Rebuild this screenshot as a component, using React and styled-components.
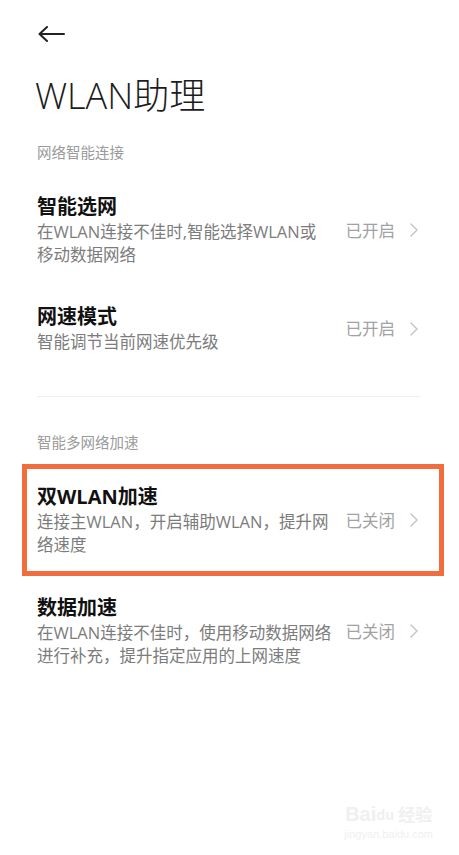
import * as React from 'react';
import styled, { createGlobalStyle } from 'styled-components';

const GlobalStyle = createGlobalStyle`
	html, body {
		margin: 0;
		padding: 0;
		background: #ffffff;
	}
	body {
		font-family: "Open Sans", "Noto Sans CJK SC", sans-serif;
		-webkit-font-smoothing: antialiased;
	}
`;

const Page = styled.div`
	position: relative;
	min-height: 855px;
	background: #ffffff;
	overflow: hidden;
`;

const TopBar = styled.div`
	display: flex;
	align-items: center;
	height: 68px;
	padding-left: 38px;
`;

const BackButton = styled.button`
	display: flex;
	align-items: center;
	padding: 0;
	border: 0;
	background: none;
	color: #222;
`;

const PageTitle = styled.h1`
	margin: 4px 0 0 35px;
	font-size: 36px;
	line-height: 48px;
	font-weight: 300;
	color: #1c1c1c;
`;

const SectionLabel = styled.div`
	padding: ${({ $top }) => $top}px 37px ${({ $bottom }) => $bottom}px;
	font-size: 14.5px;
	line-height: 20px;
	color: #9a9a9a;
`;

const Row = styled.div`
	display: flex;
	align-items: center;
	margin: ${({ $highlight }) => $highlight ? '0 15px 0 22px' : '0'};
	padding: ${({ $highlight }) => $highlight ? '15px 21px 15px 10px' : '19px 41px 19px 37px'};
	border: ${({ $highlight }) => $highlight ? '5px solid #f36c3d' : '0'};
`;

const Texts = styled.div`
	flex: 1;
	min-width: 0;
`;

const RowTitle = styled.div`
	font-size: 20px;
	line-height: 26px;
	font-weight: 700;
	color: #111;
`;

const SubLine = styled.div`
	font-size: 16.5px;
	line-height: 23px;
	color: #7c7c7c;
	white-space: nowrap;
`;

const Status = styled.span`
	font-size: 16.5px;
	line-height: 23px;
	color: #a2a2a2;
	margin-right: 15px;
	white-space: nowrap;
`;

const Divider = styled.div`
	height: 1px;
	margin: 24px 39px 0 37px;
	background: #efefef;
`;

const Watermark = styled.div`
	position: absolute;
	right: 26px;
	bottom: 14px;
	display: flex;
	flex-direction: column;
	align-items: center;
	color: #f0f0f0;
	font-family: "Liberation Sans", sans-serif;
	pointer-events: none;
`;

const WatermarkLogo = styled.div`
	display: flex;
	align-items: flex-end;
	font-size: 20px;
	font-weight: 700;
	line-height: 22px;
`;

const WatermarkSmall = styled.span`
	font-size: ${({ $size }) => $size}px;
	font-family: "Noto Sans CJK SC", "Liberation Sans", sans-serif;
	margin-left: ${({ $gap }) => $gap || 0}px;
`;

const WatermarkUrl = styled.div`
	font-size: 11px;
	line-height: 14px;
	margin-top: 2px;
`;

const ArrowIcon = () => (
	<svg width="27" height="16" viewBox="0 0 27 16" fill="none">
		<path d="M1.5 8H26M9 1L1.5 8L9 15" stroke="currentColor" strokeWidth="2" strokeLinecap="round" strokeLinejoin="round" />
	</svg>
);

const Chevron = () => (
	<svg width="8" height="14" viewBox="0 0 8 14" fill="none">
		<path d="M1 1L7 7L1 13" stroke="#c2c2c2" strokeWidth="1.4" strokeLinecap="round" strokeLinejoin="round" />
	</svg>
);

const SettingRow = ({ title, lines, status, highlight }) => (
	<Row $highlight={highlight}>
		<Texts>
			<RowTitle>{title}</RowTitle>
			{lines.map(line => <SubLine key={line}>{line}</SubLine>)}
		</Texts>
		<Status>{status}</Status>
		<Chevron />
	</Row>
);

export default function App() {
	return (
		<Page>
			<GlobalStyle />
			<TopBar>
				<BackButton aria-label="返回"><ArrowIcon /></BackButton>
			</TopBar>
			<PageTitle>WLAN助理</PageTitle>

			<SectionLabel $top={23} $bottom={12}>网络智能连接</SectionLabel>
			<SettingRow
				title="智能选网"
				lines={['在WLAN连接不佳时,智能选择WLAN或', '移动数据网络']}
				status="已开启"
			/>
			<SettingRow
				title="网速模式"
				lines={['智能调节当前网速优先级']}
				status="已开启"
			/>
			<Divider />

			<SectionLabel $top={36} $bottom={11}>智能多网络加速</SectionLabel>
			<SettingRow
				highlight
				title="双WLAN加速"
				lines={['连接主WLAN，开启辅助WLAN，提升网', '络速度']}
				status="已关闭"
			/>
			<SettingRow
				title="数据加速"
				lines={['在WLAN连接不佳时，使用移动数据网络', '进行补充，提升指定应用的上网速度']}
				status="已关闭"
			/>

			<Watermark>
				<WatermarkLogo>
					Bai<WatermarkSmall $size={14}>du</WatermarkSmall>
					<WatermarkSmall $size={17} $gap={4}>经验</WatermarkSmall>
				</WatermarkLogo>
				<WatermarkUrl>jingyan.baidu.com</WatermarkUrl>
			</Watermark>
		</Page>
	);
}
